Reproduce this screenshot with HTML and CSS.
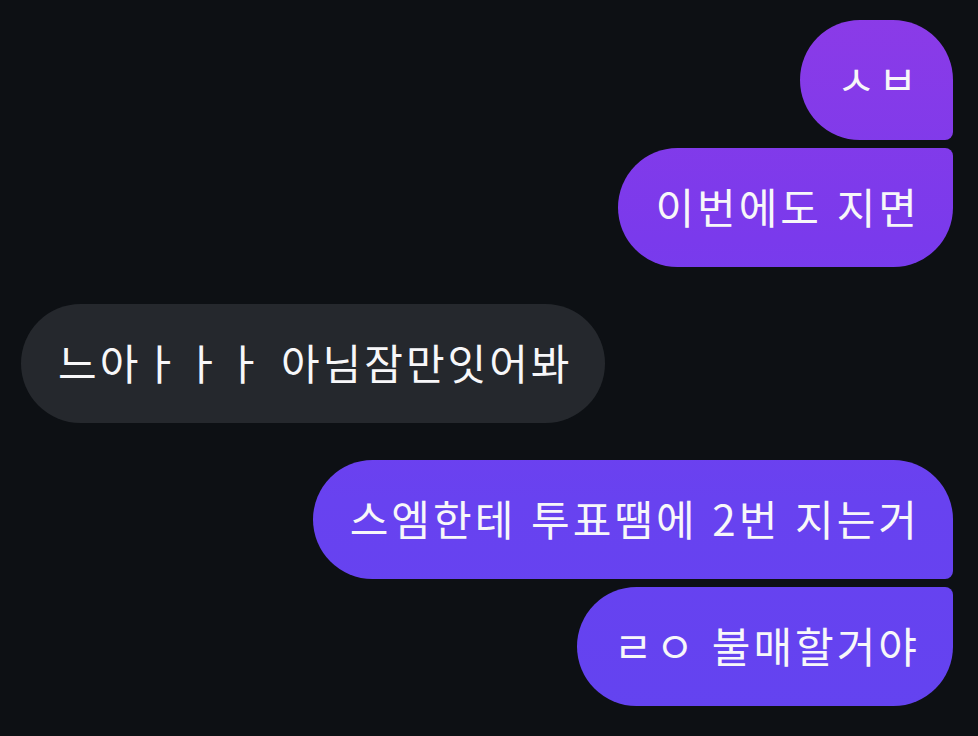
FILE: index.html
```html
<!DOCTYPE html>
<html lang="ko">
<head>
<meta charset="utf-8">
<link rel="stylesheet" href="styles.css">
</head>
<body>
<div class="chat">
  <div class="bubble sent first">ㅅㅂ</div>
  <div class="bubble sent last grouped">이번에도 지면</div>
  <div class="bubble recv">느아ㅏㅏㅏ 아님잠만잇어봐</div>
  <div class="bubble sent first">스엠한테 투표땜에 2번 지는거</div>
  <div class="bubble sent last grouped">ㄹㅇ 불매할거야</div>
</div>
</body>
</html>
```
FILE: styles.css
```css
html, body {
  margin: 0;
  padding: 0;
  background: #0d1014;
}
body {
  width: 978px;
  height: 736px;
  overflow: hidden;
  font-family: "Noto Sans CJK KR", "Noto Sans", sans-serif;
}
.chat {
  display: flex;
  flex-direction: column;
  align-items: flex-end;
  gap: 37px;
  padding: 20px 25px 0 21px;
}
.bubble {
  box-sizing: border-box;
  height: 119px;
  padding: 0 33px 5px 37px;
  display: flex;
  align-items: center;
  font-size: 42px;
  letter-spacing: 3px;
  color: #f7f7f9;
  border-radius: 60px;
  white-space: nowrap;
}
.bubble:first-child {
  height: 120px;
}
.bubble.grouped {
  margin-top: -29px;
}
.sent {
  background: linear-gradient(180deg, #8c3be7 0px, #7a3aec 240px, #6842f0 500px, #6343f0 736px);
  background-attachment: fixed;
}
.sent.first {
  border-bottom-right-radius: 8px;
}
.sent.last {
  border-top-right-radius: 8px;
}
.recv {
  align-self: flex-start;
  background: #25282d;
}
```
